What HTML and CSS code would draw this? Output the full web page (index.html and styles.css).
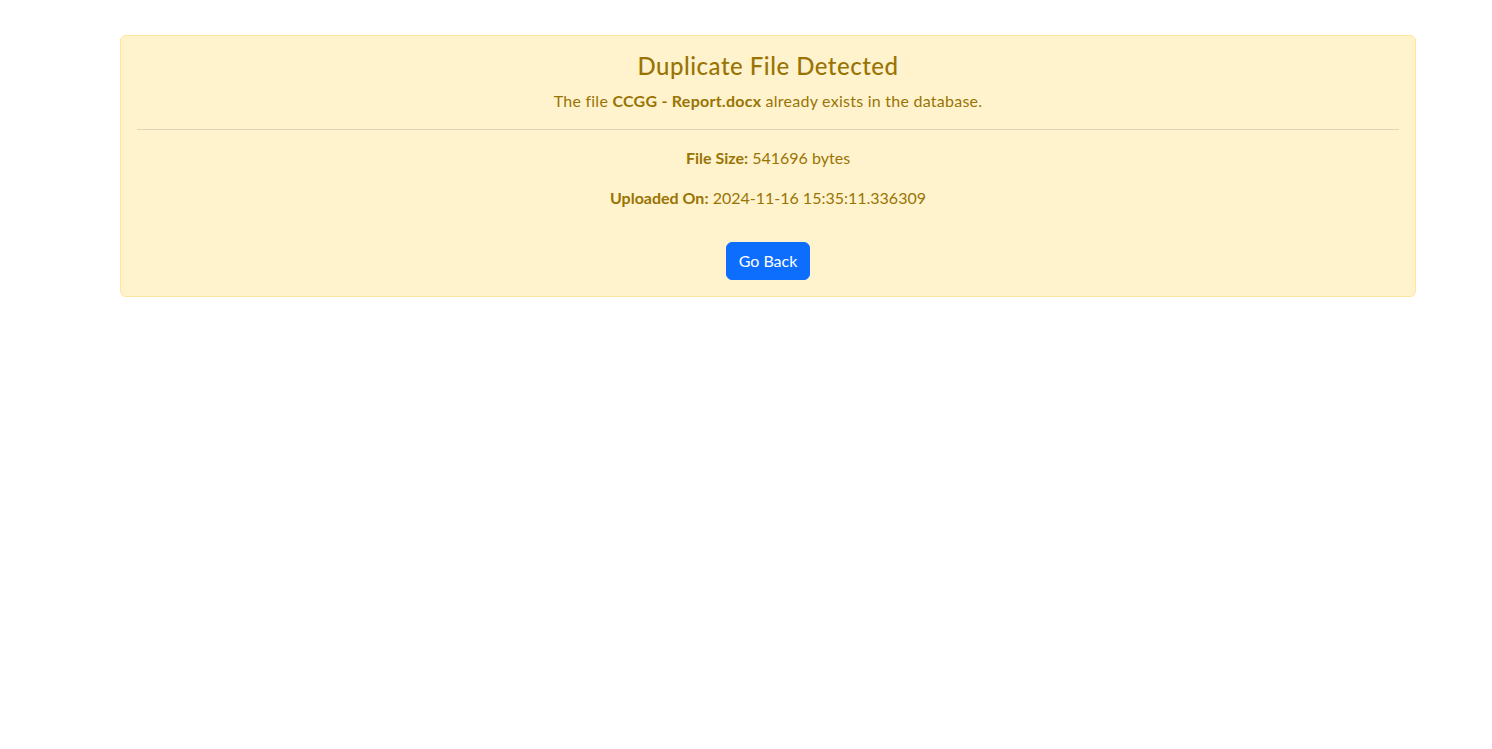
FILE: index.html
```html
<!DOCTYPE html>
<html lang="en">
<head>
<meta charset="utf-8">
<title>Duplicate File Detected</title>
<link rel="stylesheet" href="styles.css">
</head>
<body>
<div class="container">
  <div class="alert">
    <h4 class="alert-heading">Duplicate File Detected</h4>
    <p>The file <strong>CCGG - Report.docx</strong> already exists in the database.</p>
    <hr>
    <p class="meta"><strong>File Size:</strong> 541696 bytes</p>
    <p class="meta"><strong>Uploaded On:</strong> 2024-11-16 15:35:11.336309</p>
    <a href="#" class="btn">Go Back</a>
  </div>
</div>
</body>
</html>
```

FILE: styles.css
```css
html, body {
  margin: 0;
  padding: 0;
  background: #fff;
}
body {
  font-family: "Lato", "Noto Sans", sans-serif;
  font-size: 16px;
  line-height: 24px;
  color: #212529;
}
.container {
  padding: 35px 0 0 120px;
}
.alert {
  width: 1296px;
  box-sizing: border-box;
  padding: 16px;
  background: #fff3cd;
  border: 1px solid #ffe69c;
  border-radius: 6px;
  color: #997404;
  text-align: center;
  letter-spacing: 0.25px;
}
.alert-heading {
  margin: 0 0 8px;
  font-size: 24px;
  line-height: 28.8px;
  font-weight: 500;
  letter-spacing: 0.5px;
}
.alert p {
  margin: 0 0 16px;
}
.alert p.meta {
  letter-spacing: 0;
}
.alert strong {
  font-weight: 700;
}
.alert hr {
  margin: 16px 0;
  border: 0;
  border-top: 1px solid currentColor;
  opacity: 0.25;
}
.btn {
  display: inline-block;
  margin-top: 16px;
  padding: 6px 12px;
  border: 1px solid #0d6efd;
  border-radius: 6px;
  background: #0d6efd;
  color: #fff;
  text-decoration: none;
  font-size: 16px;
  line-height: 24px;
  letter-spacing: 0;
}
```
